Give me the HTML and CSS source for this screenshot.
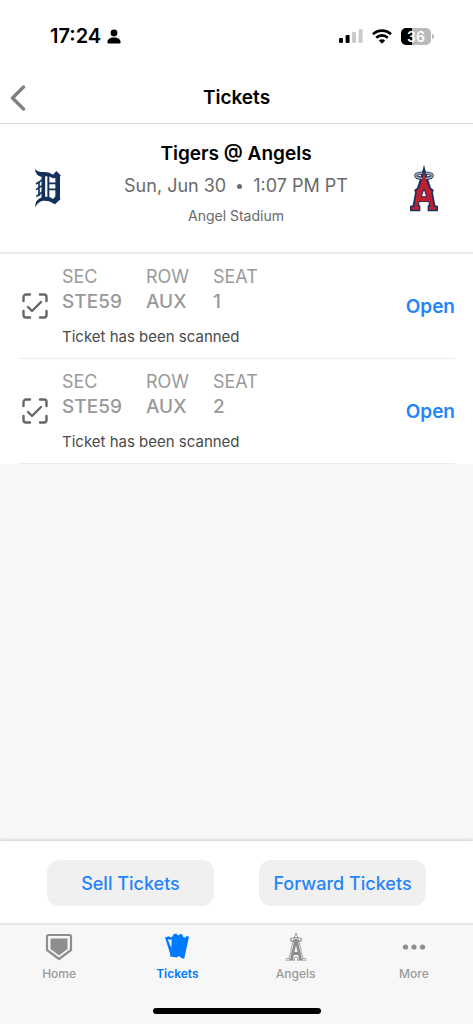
FILE: index.html
```html
<!DOCTYPE html>
<html lang="en">
<head>
    <meta charset="UTF-8">
    <meta name="viewport" content="width=device-width, initial-scale=1.0">
    <title>Tickets</title>
    <link rel="stylesheet" href="styles.css">
</head>
<body>
    <div class="status-bar">
        <div class="status-left">
            <span class="time">17:24</span>
            <svg width="14" height="15" viewBox="0 0 14 15"><circle cx="7" cy="4" r="3.4"/><path d="M0.4 13.6C0.4 10.4 3 8.6 7 8.6s6.6 1.8 6.6 5c0 .5-.3.8-.8.8H1.2c-.5 0-.8-.3-.8-.8z"/></svg>
        </div>
        <div class="status-right">
            <svg width="24" height="16" viewBox="0 0 24 16"><rect x="0" y="10" width="4" height="5" rx="1.2"/><rect x="6.6" y="7" width="4" height="8" rx="1.2"/><g fill="#cbcbcb"><rect x="13" y="4" width="4" height="11" rx="1.2"/><rect x="19.6" y="1" width="4" height="14" rx="1.2"/></g></svg>
            <svg width="20" height="15" viewBox="0 0 20 15"><g fill="none" stroke="#000" stroke-width="2.6"><path d="M1 5.2C6 .4 14 .4 19 5.2"/><path d="M4.2 8.7c3.3-3.1 8.3-3.1 11.6 0"/></g><path d="M6.8 11.6c1.8-1.7 4.6-1.7 6.4 0L10 14.8z"/></svg>
            <span class="battery">36</span>
        </div>
    </div>

    <header class="nav-bar">
        <button class="back" type="button" aria-label="Back">
            <svg width="16" height="26" viewBox="0 0 16 26"><path d="M13.5 2L2.5 13l11 11" fill="none" stroke="#808080" stroke-width="3.4" stroke-linecap="round" stroke-linejoin="round"/></svg>
        </button>
        <h1>Tickets</h1>
    </header>

    <main>
        <section class="match">
            <svg class="team" width="30" height="40" viewBox="0 0 90 120" role="img" aria-label="Tigers">
                <g fill="none" stroke="#14315c">
                    <path d="M31 18v76" stroke-width="11"/>
                    <path d="M46 24v66" stroke-width="6"/>
                    <path d="M46 46h26M46 64h26" stroke-width="5"/>
                    <path d="M74 22v72" stroke-width="14"/>
                    <path d="M18 42v42M9 48l20-13M9 65l20-13M10 86l18-14" stroke-width="5"/>
                </g>
                <g fill="#14315c">
                    <path d="M6 2c6 9 15 10 28 10 10 0 17 2 26 8l10-11 13 13-5 12-8-4-10 1-14-7-20 2C15 25 7 16 6 2z"/>
                    <path d="M7 118c-1-15 5-24 17-29 14-5 27-3 36 4l8-8 15 8-17 16-18-9c-16-5-32-2-41 18z"/>
                </g>
            </svg>
            <div class="match-info">
                <h2>Tigers @ Angels</h2>
                <p class="date"><span>Sun, Jun 30</span><span class="dot"></span><span>1:07 PM PT</span></p>
                <p class="venue">Angel Stadium</p>
            </div>
            <svg class="team" width="30" height="48" viewBox="0 0 90 144" role="img" aria-label="Angels">
                <path d="M45 2l4 16 17 54 8 5-2 10 7 37 8 2v16H56v-17l4-3-2-8H32l-2 8 4 3v17H3v-16l8-2 7-37-2-10 8-5 17-54z" fill="#17325f"/>
                <path d="M45 36l17 40 7 5-2 7 7 40 8 2v7H60v-8l5-3-5-14H30l-5 14 5 3v8H8v-7l8-2 7-40-2-7 7-5z" fill="#c01f30"/>
                <path d="M45 74l8 24H37z" fill="#fff" stroke="#17325f" stroke-width="3"/>
                <ellipse cx="45" cy="35" rx="25" ry="8" fill="none" stroke="#17325f" stroke-width="9"/>
                <ellipse cx="45" cy="35" rx="25" ry="8" fill="none" stroke="#a4adb5" stroke-width="4"/>
                <path d="M42 18h6l3 18H39z" fill="#17325f"/>
                <path d="M45 24l11 40H34z" fill="#c01f30"/>
            </svg>
        </section>

        <ul class="tickets">
            <li class="ticket">
                <svg class="scan" width="26" height="26" viewBox="0 0 26 26"><g fill="none" stroke="#666" stroke-width="2.4" stroke-linecap="round" stroke-linejoin="round"><path d="M1.5 8V4A2.5 2.5 0 0 1 4 1.5h4M18 1.5h4A2.5 2.5 0 0 1 24.5 4v4M24.5 18v4a2.5 2.5 0 0 1-2.5 2.5h-4M8 24.5H4A2.5 2.5 0 0 1 1.5 22v-4"/><path d="M6 14l4 4 9-9"/></g></svg>
                <div class="details">
                    <table>
                        <thead><tr><th>SEC</th><th>ROW</th><th>SEAT</th></tr></thead>
                        <tbody><tr><td>STE59</td><td>AUX</td><td>1</td></tr></tbody>
                    </table>
                    <p>Ticket has been scanned</p>
                </div>
                <a class="open" href="#">Open</a>
            </li>
            <li class="ticket">
                <svg class="scan" width="26" height="26" viewBox="0 0 26 26"><g fill="none" stroke="#666" stroke-width="2.4" stroke-linecap="round" stroke-linejoin="round"><path d="M1.5 8V4A2.5 2.5 0 0 1 4 1.5h4M18 1.5h4A2.5 2.5 0 0 1 24.5 4v4M24.5 18v4a2.5 2.5 0 0 1-2.5 2.5h-4M8 24.5H4A2.5 2.5 0 0 1 1.5 22v-4"/><path d="M6 14l4 4 9-9"/></g></svg>
                <div class="details">
                    <table>
                        <thead><tr><th>SEC</th><th>ROW</th><th>SEAT</th></tr></thead>
                        <tbody><tr><td>STE59</td><td>AUX</td><td>2</td></tr></tbody>
                    </table>
                    <p>Ticket has been scanned</p>
                </div>
                <a class="open" href="#">Open</a>
            </li>
        </ul>
    </main>

    <div class="actions">
        <button type="button">Sell Tickets</button>
        <button type="button">Forward Tickets</button>
    </div>

    <footer>
        <nav class="tabs">
            <a href="#">
                <svg width="28" height="28" viewBox="0 0 28 28"><path d="M3.5 2h21A1.5 1.5 0 0 1 26 3.5V17L14 26 2 17V3.5A1.5 1.5 0 0 1 3.5 2z" fill="none" stroke="#8e8e8e" stroke-width="2.2" stroke-linejoin="round"/><path d="M5.5 5.5h17V16L14 22.5 5.5 16z" fill="#8e8e8e"/></svg>
                Home
            </a>
            <a href="#" class="active">
                <svg width="28" height="28" viewBox="0 0 28 28"><path d="M2 4.6l4-1.4c.8 1.2 2.300 1.300 3.300.4L11 1l2.500-.4c.3 1.800 2.400 2.200 3.500.4l2.500.6.4 2c1.200 1.400 3 1.200 3.600-.6l2.500.8-4.800 22-3.200-.8c-.4-1.800-2.800-2.400-4.200-.6l-6.500-1-.2-3z" fill="#007aff"/><path d="M4.800 6.200c1.500.6 2.700.6 4 .2L8.300 15z" fill="#f7f7f7"/></svg>
                Tickets
            </a>
            <a href="#">
                <svg width="28" height="28" viewBox="0 0 28 28"><g fill="none" stroke="#8e8e8e"><path d="M14 0l1.5 4L19 16v3l2 6.500h2.500V28H16l-.5-4h-3l-.5 4H4.500v-2.500H7L9 19v-3l3.500-12z" stroke-width=".8"/><ellipse cx="14" cy="6.500" rx="5.500" ry="2" stroke-width="1.200"/><path d="M14 6L9.500 26M14 6l4.500 20M10.500 20.500h7" stroke-width="2.800"/><path d="M7 26.500h4.500M16.500 26.500H21" stroke-width="1.600"/></g></svg>
                Angels
            </a>
            <a href="#">
                <svg width="28" height="28" viewBox="0 0 28 28"><g fill="#8e8e8e"><circle cx="5.500" cy="14" r="2.600"/><circle cx="14" cy="14" r="2.600"/><circle cx="22.500" cy="14" r="2.600"/></g></svg>
                More
            </a>
        </nav>
        <div class="home-indicator"></div>
    </footer>
</body>
</html>
```
FILE: styles.css
```css
* {
    box-sizing: border-box;
}

body {
    margin: 0;
    min-height: 100vh;
    display: flex;
    flex-direction: column;
    font-family: Inter, 'Liberation Sans', sans-serif;
    background-color: #f7f7f7;
    color: #000;
}

h1, h2, p, ul {
    margin: 0;
    padding: 0;
}

svg {
    display: block;
    flex: none;
}

button {
    font-family: inherit;
    border: none;
    cursor: pointer;
}

a {
    text-decoration: none;
}

/* Status bar */
.status-bar {
    display: flex;
    justify-content: space-between;
    align-items: center;
    height: 72px;
    padding: 0 42px 0 50px;
    background-color: #fff;
}

.status-left, .status-right {
    display: flex;
    align-items: center;
    gap: 6px;
}

.status-right {
    gap: 9px;
}

.time {
    font-size: 20px;
    font-weight: 600;
}

.battery {
    position: relative;
    width: 30px;
    border-radius: 5px;
    background: linear-gradient(to right, #000 36%, #b9b9b9 36%);
    color: #fff;
    font-size: 14px;
    line-height: 17px;
    font-weight: 600;
    text-align: center;
}

.battery::after {
    content: "";
    position: absolute;
    left: 31px;
    top: 6px;
    width: 2px;
    height: 5px;
    border-radius: 0 2px 2px 0;
    background-color: #b9b9b9;
}

/* Navigation bar */
.nav-bar {
    display: grid;
    grid-template-columns: 50px 1fr 50px;
    align-items: center;
    height: 52px;
    background-color: #fff;
    border-bottom: 1px solid #dedede;
}

.back {
    padding: 0 10px;
    background: none;
}

h1, h2 {
    font-size: 19px;
    line-height: 24px;
    font-weight: 600;
    text-align: center;
}

main {
    flex: 1;
}

/* Game */
.match {
    display: flex;
    justify-content: space-between;
    align-items: center;
    padding: 18px 34px 26px 33px;
    background-color: #fff;
    border-bottom: 2px solid #e9e9e9;
}

.team {
    margin-top: 8px;
}

.match-info {
    text-align: center;
}

.date {
    display: flex;
    justify-content: center;
    align-items: center;
    gap: 11px;
    margin-top: 8px;
    font-size: 18px;
    line-height: 24px;
    color: #6a6a6a;
}

.dot {
    width: 5px;
    height: 5px;
    border-radius: 50%;
    background-color: #6a6a6a;
}

.venue {
    margin-top: 8px;
    font-size: 14px;
    line-height: 20px;
    color: #6a6a6a;
}

/* Ticket list */
.tickets {
    padding: 0 18px;
    list-style: none;
    background-color: #fff;
}

.ticket {
    display: flex;
    align-items: center;
    padding: 10px 0;
    border-bottom: 1px solid #ededed;
}

.scan {
    margin: 0 14px 0 4px;
}

.details {
    flex: 1;
}

table {
    border-collapse: collapse;
    table-layout: fixed;
    width: 210px;
    font-size: 18px;
    line-height: 25px;
    color: #999;
    text-align: left;
}

th, td {
    padding: 0;
    font-weight: 400;
}

th:first-child {
    width: 84px;
}

th:nth-child(2) {
    width: 67px;
}

td {
    font-size: 19px;
    font-weight: 500;
}

.details p {
    margin-top: 12px;
    font-size: 15px;
    line-height: 22px;
    color: #4a4a4a;
}

.open {
    font-size: 19px;
    font-weight: 600;
    color: #2485fb;
}

/* Action buttons */
.actions {
    display: flex;
    justify-content: space-between;
    gap: 45px;
    padding: 19px 47px 17px;
    background-color: #fff;
    box-shadow: 0 -1px 3px rgba(0,0,0,0.2);
}

.actions button {
    flex: 1 1 0;
    height: 46px;
    padding: 0;
    border-radius: 12px;
    background-color: #f0f0f1;
    color: #2485fb;
    font-size: 18px;
    font-weight: 500;
    white-space: nowrap;
}

/* Tab bar */
footer {
    padding: 8px 0 10px;
    background-color: #f7f7f7;
    border-top: 2px solid #e6e6e6;
}

.tabs {
    display: grid;
    grid-template-columns: repeat(4, 1fr);
}

.tabs a {
    display: flex;
    flex-direction: column;
    align-items: center;
    gap: 5px;
    font-size: 12px;
    line-height: 16px;
    font-weight: 500;
    color: #9a9a9a;
}

.tabs .active {
    font-weight: 600;
    color: #007aff;
}

.home-indicator {
    width: 168px;
    height: 6px;
    margin: 26px auto 0;
    border-radius: 3px;
    background-color: #000;
}
```
